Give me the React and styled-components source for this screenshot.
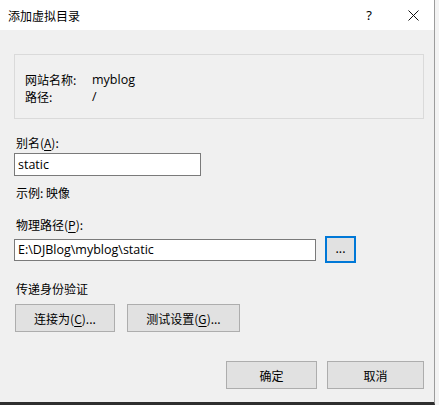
import styled, { createGlobalStyle } from "styled-components";

const GlobalStyle = createGlobalStyle`
  html, body {
    margin: 0;
    padding: 0;
    background: #f3f3f3;
  }
  body {
    font-family: "Noto Sans CJK SC", "Microsoft YaHei", sans-serif;
    font-size: 12px;
    color: #000;
  }
`

const Window = styled.div`
  width: 434px;
  height: 402px;
  background: #f0f0f0;
  border-right: 1px solid #9c9c9c;
  border-bottom: 3px solid #2e2e2e;
  display: flex;
  flex-direction: column;
`

const TitleBar = styled.div`
  height: 30px;
  background: #fff;
  display: flex;
  align-items: center;
  padding-left: 8px;
  line-height: 17px;
`

const Title = styled.div`
  flex: 1;
`

const Help = styled.div`
  width: 14px;
  font-family: "Noto Sans", sans-serif;
  font-size: 13px;
  margin-right: 16px;
  text-align: center;
`

const Close = styled.div`
  width: 42px;
  height: 30px;
  display: flex;
  align-items: center;
  justify-content: center;
  svg {
    display: block;
  }
`

const Body = styled.div`
  padding: 24px 10px 0 14px;
  display: flex;
  flex-direction: column;
  line-height: 17px;
`

const Group = styled.div`
  border: 1px solid #dadada;
  padding: 16px 10px 13px;
  display: grid;
  grid-template-columns: 67px 1fr;
  row-gap: 0;
`

const Value = styled.span`
  font-family: "Open Sans", "Noto Sans CJK SC", sans-serif;
  font-size: 12.5px;
`

const Label = styled.div`
  margin-top: ${p => p.$top || 0}px;
  padding-left: 2px;
`

const Key = styled.span`
  text-decoration: underline;
  text-underline-offset: 2px;
`

const Input = styled.div`
  box-sizing: border-box;
  width: ${p => p.$w}px;
  height: ${p => p.$h || 23}px;
  background: #fff;
  border: 1px solid #7a7a7a;
  padding: 0 3px;
  display: flex;
  align-items: center;
  font-family: "Open Sans", sans-serif;
  font-size: 12.5px;
`

const PathRow = styled.div`
  margin-top: 3px;
  display: flex;
  align-items: center;
  gap: 9px;
`

const Button = styled.div`
  box-sizing: border-box;
  width: ${p => p.$w}px;
  height: ${p => p.$h || 28}px;
  background: #e1e1e1;
  border: ${p => (p.$focus ? "2px solid #0078d7" : "1px solid #adadad")};
  display: flex;
  align-items: center;
  justify-content: center;
  padding-bottom: ${p => (p.$focus ? 4 : 0)}px;
`

const ButtonRow = styled.div`
  display: flex;
  gap: ${p => p.$gap}px;
  margin-top: ${p => p.$top}px;
  margin-left: ${p => p.$left || 0}px;
  justify-content: ${p => p.$end ? "flex-end" : "flex-start"};
`

function App() {
  return (
    <>
      <GlobalStyle />
      <Window>
        <TitleBar>
          <Title>添加虚拟目录</Title>
          <Help>?</Help>
          <Close>
            <svg width="11" height="11" viewBox="0 0 11 11">
              <path d="M0.5 0.5 L10.5 10.5 M10.5 0.5 L0.5 10.5" stroke="#111" strokeWidth="1" />
            </svg>
          </Close>
        </TitleBar>
        <Body>
          <Group>
            <span>网站名称:</span>
            <Value>myblog</Value>
            <span>路径:</span>
            <Value>/</Value>
          </Group>
          <Label $top={15}>别名(<Key>A</Key>):</Label>
          <div style={{ marginTop: 2 }}>
            <Input $w={187}>static</Input>
          </div>
          <Label $top={8}>示例: 映像</Label>
          <Label $top={15}>物理路径(<Key>P</Key>):</Label>
          <PathRow>
            <Input $w={302} $h={22}>E:\DJBlog\myblog\static</Input>
            <Button $w={31} $h={27} $focus>...</Button>
          </PathRow>
          <Label $top={17}>传递身份验证</Label>
          <ButtonRow $gap={12} $top={7} $left={1}>
            <Button $w={100}>连接为(<Key>C</Key>)...</Button>
            <Button $w={113}>测试设置(<Key>G</Key>)...</Button>
          </ButtonRow>
          <ButtonRow $gap={10} $top={29} $end>
            <Button $w={91}>确定</Button>
            <Button $w={97}>取消</Button>
          </ButtonRow>
        </Body>
      </Window>
    </>
  )
}

export default App
